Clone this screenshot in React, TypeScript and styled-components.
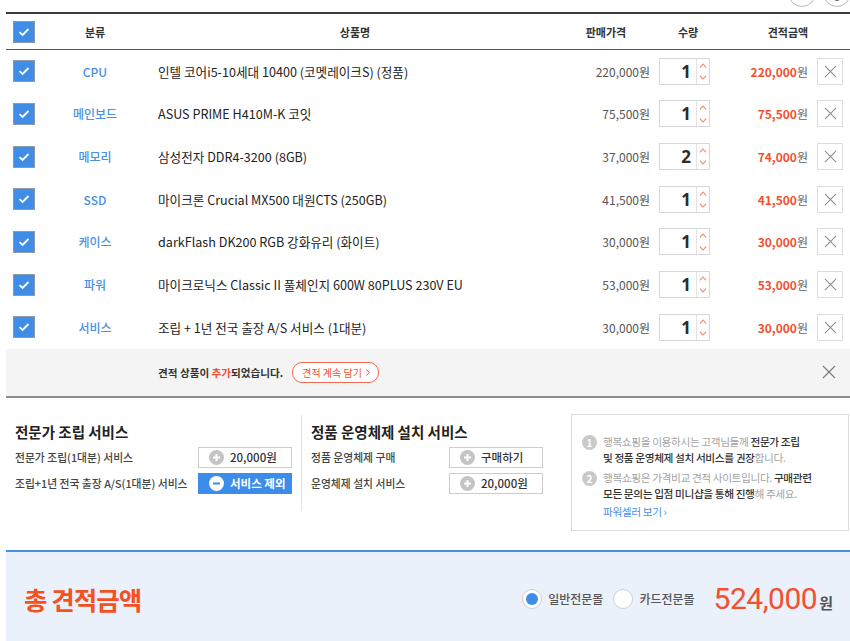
import React from 'react';
import styled, { createGlobalStyle } from 'styled-components';

const GlobalStyle = createGlobalStyle`
  body {
    margin: 0;
    background: #fff;
    overflow: hidden;
    font-family: "Noto Sans CJK KR", "Noto Sans", sans-serif;
    color: #333;
  }
`;

const RED = '#f4502f';
const BLUE = '#4a90e2';

const Page = styled.div`
  width: 850px;
`;

const TopBar = styled.div`
  height: 12px;
  overflow: hidden;
  display: flex;
  justify-content: flex-end;
  align-items: flex-end;
  gap: 7px;
`;

const RoundButton = styled.span<{ $last?: boolean }>`
  flex: none;
  width: 28px;
  height: 28px;
  margin-bottom: 5px;
  margin-right: ${(p) => (p.$last ? '-1px' : '0')};
  border: 1px solid #b9b9b9;
  border-radius: 50%;
  background: #fff;
  display: flex;
  align-items: flex-end;
  justify-content: center;
  box-sizing: border-box;
`;

const Cart = styled.div`
  margin-left: 6px;
  width: 844px;
`;

const cols = '36px 106px 414px 88px 76px 84px 40px';

const CartHead = styled.div`
  display: grid;
  grid-template-columns: ${cols};
  height: 35px;
  align-items: center;
  border-top: 2px solid #3a3a3a;
  border-bottom: 1px solid #555;
  font-size: 11px;
  font-weight: 700;
  color: #333;
`;

const HeadCell = styled.div<{ $span?: number }>`
  text-align: center;
  grid-column: span ${(p) => p.$span ?? 1};
`;

const CheckCell = styled.div`
  display: flex;
  justify-content: center;
`;

const Check = styled.span`
  width: 22px;
  height: 22px;
  box-sizing: border-box;
  border: 1px solid #8f9aa8;
  background: #3f8de6;
  display: flex;
  align-items: center;
  justify-content: center;
`;

const CartRow = styled.div`
  display: grid;
  grid-template-columns: ${cols};
  height: 42.67px;
  align-items: center;
  font-size: 12px;
`;

const Category = styled.div`
  text-align: center;
  color: ${BLUE};
  font-weight: 500;
`;

const Name = styled.div`
  padding-left: 10px;
  font-size: 12.6px;
  color: #222;
  white-space: nowrap;
`;

const Price = styled.div`
  text-align: right;
  color: #555;
`;

const QtyCell = styled.div`
  padding-left: 9px;
`;

const QtyBox = styled.div`
  width: 51px;
  height: 27px;
  box-sizing: border-box;
  border: 1px solid #d8d8d8;
  display: flex;
`;

const QtyValue = styled.span`
  flex: 1;
  text-align: right;
  padding-right: 5px;
  font-size: 17px;
  font-weight: 700;
  line-height: 25px;
  color: #2b2b2b;
  font-family: "Noto Sans", sans-serif;
`;

const Spinner = styled.span`
  width: 12px;
  border-left: 1px solid #e3e3e3;
  display: flex;
  flex-direction: column;
  align-items: center;
  justify-content: space-around;
`;

const Amount = styled.div`
  text-align: right;
  padding-right: 2px;
  color: #666;

  b {
    color: ${RED};
    font-weight: 700;
  }
`;

const RemoveCell = styled.div`
  padding-left: 7px;
`;

const RemoveButton = styled.span`
  width: 26px;
  height: 27px;
  box-sizing: border-box;
  border: 1px solid #dcdcdc;
  display: flex;
  align-items: center;
  justify-content: center;
`;

const Notice = styled.div`
  height: 47px;
  background: #f4f4f4;
  border-bottom: 2px solid #8d8d8d;
  display: flex;
  align-items: center;
  padding-left: 152px;
  padding-right: 14px;
  font-size: 10.6px;
  font-weight: 700;
  color: #333;

  em {
    font-style: normal;
    color: ${RED};
  }
`;

const Pill = styled.span`
  margin-left: 9px;
  height: 19px;
  padding: 0 8px 0 9px;
  border: 1px solid #ef6a52;
  border-radius: 10px;
  background: #fff;
  color: ${RED};
  font-size: 10px;
  font-weight: 400;
  display: flex;
  align-items: center;
  gap: 4px;
`;

const NoticeClose = styled.span`
  margin-left: auto;
  display: flex;
`;

const Services = styled.div`
  display: flex;
  align-items: flex-start;
  padding-top: 17px;
  margin-left: 6px;
`;

const ServiceCol = styled.div<{ $labelWidth: number; $divided?: boolean }>`
  padding: 7px 9px 17px;
  border-right: ${(p) => (p.$divided ? '1px solid #e2e2e2' : 'none')};

  h3 {
    margin: 0 0 5px;
    font-size: 14.5px;
    font-weight: 700;
    line-height: 20px;
    color: #222;
  }

  dl {
    margin: 0;
    display: grid;
    grid-template-columns: ${(p) => p.$labelWidth}px 94px;
    row-gap: 5px;
    align-items: center;
  }

  dt {
    font-size: 10.8px;
    font-weight: 500;
    color: #444;
    white-space: nowrap;
  }

  dd {
    margin: 0;
  }
`;

const OptionButton = styled.span<{ $active?: boolean }>`
  height: 21px;
  box-sizing: border-box;
  border: 1px solid ${(p) => (p.$active ? '#3b8ceb' : '#cdcdcd')};
  background: ${(p) => (p.$active ? '#3b8ceb' : '#fff')};
  color: ${(p) => (p.$active ? '#fff' : '#333')};
  font-size: 11.5px;
  font-weight: ${(p) => (p.$active ? 700 : 500)};
  display: flex;
  align-items: center;
  gap: 6px;
  padding-left: 10px;
`;

const InfoBox = styled.div`
  margin-left: 19px;
  margin-top: -1px;
  width: 278px;
  height: 117px;
  box-sizing: border-box;
  border: 1px solid #dcdcdc;
  padding: 19px 6px 0 10px;
  font-size: 10.7px;
  line-height: 16px;
  color: #a3a3a3;
  letter-spacing: -0.4px;

  strong {
    font-weight: 500;
    color: #333;
  }
`;

const InfoItem = styled.div`
  display: flex;
  gap: 6px;
  margin-bottom: 4px;
`;

const Num = styled.span`
  flex: none;
  width: 15px;
  height: 15px;
  margin-top: 1px;
  border-radius: 50%;
  background: #c9c9c9;
  color: #fff;
  font-size: 10px;
  font-weight: 700;
  line-height: 15px;
  text-align: center;
  letter-spacing: 0;
`;

const InfoLink = styled.a`
  display: inline-block;
  margin-top: 2px;
  color: ${BLUE};
  text-decoration: none;
`;

const Total = styled.div`
  margin-top: 19px;
  margin-left: 6px;
  height: 100px;
  border-top: 2px solid ${BLUE};
  background: #eaf1fb;
  display: flex;
  align-items: flex-start;
  padding: 32px 17px 0 18px;
  box-sizing: border-box;
`;

const TotalTitle = styled.h2`
  margin: 0;
  font-size: 25.5px;
  font-weight: 700;
  line-height: 30px;
  letter-spacing: -1px;
  color: #f4511e;
`;

const PayOptions = styled.div`
  margin-left: auto;
  display: flex;
  align-items: center;
  height: 30px;
`;

const Radio = styled.span<{ $checked?: boolean }>`
  width: 20px;
  height: 20px;
  box-sizing: border-box;
  border-radius: 50%;
  border: 1px solid #cfcfcf;
  background: #fff;
  display: flex;
  align-items: center;
  justify-content: center;

  &::after {
    content: '';
    width: 12px;
    height: 12px;
    border-radius: 50%;
    background: ${(p) => (p.$checked ? '#3e8ee9' : 'transparent')};
  }
`;

const RadioLabel = styled.span`
  margin: 0 10px 0 6px;
  font-size: 12px;
  font-weight: 500;
  color: #555;
`;

const TotalAmount = styled.span`
  margin-left: 9px;
  display: flex;
  align-items: baseline;
  color: #555;
  font-size: 15px;
  font-weight: 700;

  b {
    font-family: Roboto, "Noto Sans", sans-serif;
    font-size: 30px;
    font-weight: 400;
    letter-spacing: -0.5px;
    color: ${RED};
    margin-right: 2px;
  }
`;

const CheckMark = () => (
  <svg width="12" height="10" viewBox="0 0 12 10">
    <polyline points="1.5,5.2 4.6,8 10.5,2" fill="none" stroke="#fff" strokeWidth="1.8" />
  </svg>
);

const Cross = ({ size = 13, color = '#8a8a8a' }: { size?: number; color?: string }) => (
  <svg width={size} height={size} viewBox="0 0 14 14">
    <path d="M1 1 L13 13 M13 1 L1 13" stroke={color} strokeWidth="1.1" fill="none" />
  </svg>
);

const Chevron = ({ up }: { up?: boolean }) => (
  <svg width="8" height="5" viewBox="0 0 8 5">
    <polyline
      points={up ? '1,4.3 4,1 7,4.3' : '1,0.7 4,4 7,0.7'}
      fill="none"
      stroke="#f08562"
      strokeWidth="1.1"
    />
  </svg>
);

const RoundIcon = ({ minus, active }: { minus?: boolean; active?: boolean }) => (
  <svg width="15" height="15" viewBox="0 0 15 15">
    <circle cx="7.5" cy="7.5" r="7.5" fill={active ? '#fff' : '#c4c4c4'} />
    <path
      d={minus ? 'M4 7.5 H11' : 'M4 7.5 H11 M7.5 4 V11'}
      stroke={active ? '#3b8ceb' : '#fff'}
      strokeWidth="2"
    />
  </svg>
);

const items = [
  { cat: 'CPU', name: '인텔 코어i5-10세대 10400 (코멧레이크S) (정품)', price: 220000, qty: 1 },
  { cat: '메인보드', name: 'ASUS PRIME H410M-K 코잇', price: 75500, qty: 1 },
  { cat: '메모리', name: '삼성전자 DDR4-3200 (8GB)', price: 37000, qty: 2 },
  { cat: 'SSD', name: '마이크론 Crucial MX500 대원CTS (250GB)', price: 41500, qty: 1 },
  { cat: '케이스', name: 'darkFlash DK200 RGB 강화유리 (화이트)', price: 30000, qty: 1 },
  { cat: '파워', name: '마이크로닉스 Classic II 풀체인지 600W 80PLUS 230V EU', price: 53000, qty: 1 },
  { cat: '서비스', name: '조립 + 1년 전국 출장 A/S 서비스 (1대분)', price: 30000, qty: 1 },
];

const won = (n: number) => n.toLocaleString('en-US');

const App = () => {
  const total = items.reduce((sum, it) => sum + it.price * it.qty, 0);

  return (
    <Page>
      <GlobalStyle />
      <TopBar>
        <RoundButton />
        <RoundButton $last>
          <svg width="8" height="8" viewBox="0 0 8 8" style={{ marginBottom: 4 }}>
            <circle cx="4" cy="4" r="3" fill="#666" />
          </svg>
        </RoundButton>
      </TopBar>

      <Cart>
        <CartHead>
          <CheckCell>
            <Check>
              <CheckMark />
            </Check>
          </CheckCell>
          <HeadCell>분류</HeadCell>
          <HeadCell>상품명</HeadCell>
          <HeadCell>판매가격</HeadCell>
          <HeadCell>수량</HeadCell>
          <HeadCell $span={2}>견적금액</HeadCell>
        </CartHead>

        {items.map((it) => (
          <CartRow key={it.cat}>
            <CheckCell>
              <Check>
                <CheckMark />
              </Check>
            </CheckCell>
            <Category>{it.cat}</Category>
            <Name>{it.name}</Name>
            <Price>{won(it.price)}원</Price>
            <QtyCell>
              <QtyBox>
                <QtyValue>{it.qty}</QtyValue>
                <Spinner>
                  <Chevron up />
                  <Chevron />
                </Spinner>
              </QtyBox>
            </QtyCell>
            <Amount>
              <b>{won(it.price * it.qty)}</b>원
            </Amount>
            <RemoveCell>
              <RemoveButton>
                <Cross />
              </RemoveButton>
            </RemoveCell>
          </CartRow>
        ))}

        <Notice>
          <span>
            견적 상품이 <em>추가</em>되었습니다.
          </span>
          <Pill>
            견적 계속 담기
            <svg width="4" height="7" viewBox="0 0 4 7">
              <polyline points="0.5,0.5 3.2,3.5 0.5,6.5" fill="none" stroke={RED} strokeWidth="1" />
            </svg>
          </Pill>
          <NoticeClose>
            <Cross size={14} color="#777" />
          </NoticeClose>
        </Notice>
      </Cart>

      <Services>
        <ServiceCol $labelWidth={183} $divided>
          <h3>전문가 조립 서비스</h3>
          <dl>
            <dt>전문가 조립(1대분) 서비스</dt>
            <dd>
              <OptionButton>
                <RoundIcon />
                20,000원
              </OptionButton>
            </dd>
            <dt>조립+1년 전국 출장 A/S(1대분) 서비스</dt>
            <dd>
              <OptionButton $active>
                <RoundIcon minus active />
                서비스 제외
              </OptionButton>
            </dd>
          </dl>
        </ServiceCol>
        <ServiceCol $labelWidth={138}>
          <h3>정품 운영체제 설치 서비스</h3>
          <dl>
            <dt>정품 운영체제 구매</dt>
            <dd>
              <OptionButton>
                <RoundIcon />
                구매하기
              </OptionButton>
            </dd>
            <dt>운영체제 설치 서비스</dt>
            <dd>
              <OptionButton>
                <RoundIcon />
                20,000원
              </OptionButton>
            </dd>
          </dl>
        </ServiceCol>
        <InfoBox>
          <InfoItem>
            <Num>1</Num>
            <span>
              행복쇼핑을 이용하시는 고객님들께 <strong>전문가 조립</strong>
              <br />
              <strong>및 정품 운영체제 설치 서비스를 권장</strong>합니다.
            </span>
          </InfoItem>
          <InfoItem>
            <Num>2</Num>
            <span>
              행복쇼핑은 가격비교 견적 사이트입니다. <strong>구매관련</strong>
              <br />
              <strong>모든 문의는 입점 미니샵을 통해 진행</strong>해 주세요.
              <br />
              <InfoLink href="#">파워셀러 보기 ›</InfoLink>
            </span>
          </InfoItem>
        </InfoBox>
      </Services>

      <Total>
        <TotalTitle>총 견적금액</TotalTitle>
        <PayOptions>
          <Radio $checked />
          <RadioLabel>일반전문몰</RadioLabel>
          <Radio />
          <RadioLabel>카드전문몰</RadioLabel>
          <TotalAmount>
            <b>{won(total)}</b>원
          </TotalAmount>
        </PayOptions>
      </Total>
    </Page>
  );
};

export default App;
